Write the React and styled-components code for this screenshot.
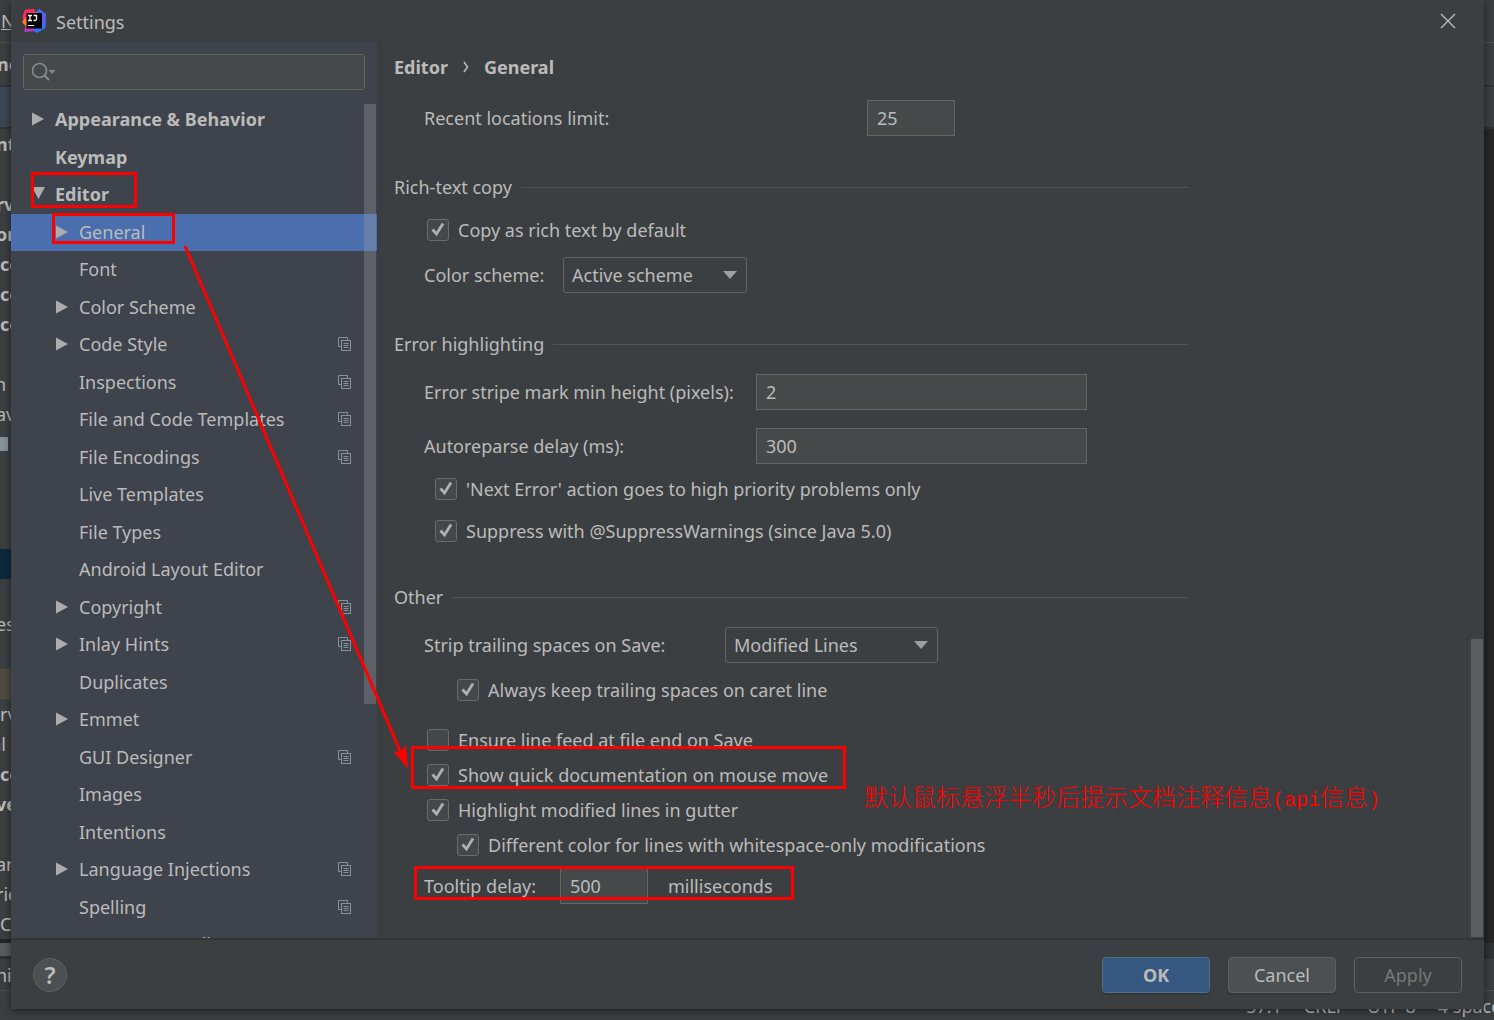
import React, { useState } from "react";
import styled, { createGlobalStyle, css } from "styled-components";

const TREE = [
  { label: "Appearance & Behavior", level: 0, arrow: "closed" },
  { label: "Keymap", level: 0 },
  { label: "Editor", level: 0, arrow: "open" },
  { label: "General", level: 1, arrow: "closed" },
  { label: "Font", level: 1 },
  { label: "Color Scheme", level: 1, arrow: "closed" },
  { label: "Code Style", level: 1, arrow: "closed", project: true },
  { label: "Inspections", level: 1, project: true },
  { label: "File and Code Templates", level: 1, project: true },
  { label: "File Encodings", level: 1, project: true },
  { label: "Live Templates", level: 1 },
  { label: "File Types", level: 1 },
  { label: "Android Layout Editor", level: 1 },
  { label: "Copyright", level: 1, arrow: "closed", project: true },
  { label: "Inlay Hints", level: 1, arrow: "closed", project: true },
  { label: "Duplicates", level: 1 },
  { label: "Emmet", level: 1, arrow: "closed" },
  { label: "GUI Designer", level: 1, project: true },
  { label: "Images", level: 1 },
  { label: "Intentions", level: 1 },
  { label: "Language Injections", level: 1, arrow: "closed", project: true },
  { label: "Spelling", level: 1, project: true },
  { label: "TextMate Bundles", level: 1 },
];

// visible ends of the project tree rows behind the dialog
const PROJECT_ROWS = [
  { text: "nt", bold: true, cut: true },
  {},
  { text: "rv", bold: true, cut: true },
  { text: "or", bold: true, cut: true },
  { text: "cc", bold: true },
  { text: "cc", bold: true },
  { text: "cc", bold: true },
  {},
  { text: "n", end: true },
  { text: "av", cut: true },
  { block: true },
  {},
  {},
  {},
  { color: "#0d293e" },
  {},
  { text: "es", cut: true },
  {},
  { color: "#4f4b41" },
  { text: "rv" },
  { text: "al", end: true },
  { text: "cc", bold: true },
  { text: "ve", bold: true, cut: true },
  {},
  { text: "ar", cut: true },
  { text: "rie", cut: true },
  { text: "C" },
];

const Logo = () => (
  <svg width="24" height="24" viewBox="0 0 24 24" aria-hidden="true">
    <defs>
      <linearGradient id="ijRed" x1="0" y1="0" x2="0" y2="1">
        <stop offset="0" stopColor="#fe2857" />
        <stop offset="0.5" stopColor="#fe315d" />
        <stop offset="1" stopColor="#a23ccf" />
      </linearGradient>
      <linearGradient id="ijBlue" x1="0" y1="0" x2="0" y2="1">
        <stop offset="0" stopColor="#2b7cf5" />
        <stop offset="0.35" stopColor="#6b57e8" />
        <stop offset="1" stopColor="#167dff" />
      </linearGradient>
    </defs>
    <path d="M13 4 L17 0 L24 5 L23.500 19 L15 24 L10 21 Z" fill="url(#ijBlue)" />
    <path d="M3 0.500 L12 0 L15 5 L8 14 L13 22 L2 23 L3.500 17 L0.500 8 Z" fill="url(#ijRed)" />
    <path d="M0 13 L3 9 L7 12 L4 17.500 Z" fill="#fc801d" />
    <rect x="4.500" y="4" width="15.500" height="15.500" fill="#000" />
    <path d="M6 6.500h4M8 6.500v5M6 11.500h4M11.500 6.500h3v3.500q0 1.500-1.500 1.500h-1.500" stroke="#fff" strokeWidth="1.300" fill="none" />
    <path d="M6 16.500h6" stroke="#fff" strokeWidth="1" />
  </svg>
);

const CloseIcon = () => (
  <svg width="16" height="16" viewBox="0 0 16 16" aria-hidden="true">
    <path d="M1 1l14 14M15 1L1 15" stroke="#bbb" strokeWidth="1.400" />
  </svg>
);

const SearchIcon = () => (
  <svg width="26" height="20" viewBox="0 0 26 20" aria-hidden="true">
    <circle cx="7.500" cy="8.500" r="7" fill="none" stroke="#7f8b91" strokeWidth="1.700" />
    <path d="M12 13l5 5" stroke="#7f8b91" strokeWidth="2.200" />
    <path d="M16.500 8h7l-3.500 4z" fill="#7f8b91" />
  </svg>
);

const ProjectIcon = () => (
  <svg width="14" height="14" viewBox="0 0 14 14" fill="none" stroke="#87939a" aria-label="For current project">
    <path d="M3.500 9.500h-3v-9h9v2.500" />
    <rect x="3.500" y="3.500" width="9" height="10" />
    <path d="M5.500 6.500h5M5.500 8.500h5M5.500 10.500h5" />
  </svg>
);

const Twisty = ({ kind }) => (
  <svg width="13" height="14" viewBox="0 0 13 14" fill="#adadad" aria-hidden="true">
    {kind === "closed" && <path d="M0 0.500v13l12-6.500z" />}
    {kind === "open" && <path d="M0 0h13l-6.500 12z" />}
  </svg>
);

const Check = ({ label, checked, indent, gap }) => {
  const [on, setOn] = useState(checked);
  return (
    <CheckLabel $indent={indent} $gap={gap}>
      <Box>
        <Tick type="checkbox" checked={on} onChange={(e) => setOn(e.target.checked)} />
        {on && (
          <svg width="22" height="22" viewBox="0 0 22 22" aria-hidden="true">
            <path d="M5.500 10.500l4 4.500 6.500-10.500" fill="none" stroke="#b0b0b0" strokeWidth="2.800" />
          </svg>
        )}
      </Box>
      {label}
    </CheckLabel>
  );
};

const Select = ({ id, value, width }) => (
  <Combo $width={width}>
    <ComboInput id={id} defaultValue={value}>
      <option>{value}</option>
    </ComboInput>
    <svg width="14" height="8" viewBox="0 0 14 8" aria-hidden="true">
      <path d="M0 0h14l-7 8z" fill="#9da0a2" />
    </svg>
  </Combo>
);

const SectionTitle = ({ children }) => (
  <Heading>
    {children}
    <Rule />
  </Heading>
);

const App = () => {
  const [selected, setSelected] = useState("General");

  return (
    <Desktop>
      <GlobalStyle />
      <Ide aria-hidden="true">
        <IdeMenu><u>N</u></IdeMenu>
        <IdeNav>nc</IdeNav>
        <IdeTabs />
        <IdeMain>
          <IdeTree>
            {PROJECT_ROWS.map((row, i) => (
              <IdeRow key={i} $bold={row.bold} $end={row.end} $cut={row.cut} $color={row.color}>
                {row.block ? <IdeBlock /> : <span>{row.text}</span>}
              </IdeRow>
            ))}
          </IdeTree>
        </IdeMain>
        <IdeScroll />
        <IdeTools>nin</IdeTools>
        <IdeStatus>
          <span>57:1</span>
          <span>CRLF</span>
          <span>UTF-8</span>
          <span>4 spaces</span>
        </IdeStatus>
      </Ide>

      <Dialog role="dialog" aria-label="Settings">
        <TitleBar>
          <Logo />
          <Title>Settings</Title>
          <CloseButton type="button" aria-label="Close"><CloseIcon /></CloseButton>
        </TitleBar>

        <Body>
          <Sidebar>
            <SearchBox>
              <SearchIcon />
              <SearchInput type="text" aria-label="Search settings" />
            </SearchBox>
            <Tree>
              {TREE.map((item) => (
                <TreeRow
                  key={item.label}
                  type="button"
                  $level={item.level}
                  $selected={item.label === selected}
                  onClick={() => setSelected(item.label)}
                >
                  <Twisty kind={item.arrow} />
                  <TreeLabel>{item.label}</TreeLabel>
                  {item.project && <ProjectIcon />}
                </TreeRow>
              ))}
            </Tree>
            <SideThumb />
          </Sidebar>

          <Content>
            <Breadcrumb>
              <span>Editor</span>
              <svg width="6" height="12" viewBox="0 0 6 12" aria-hidden="true">
                <path d="M1 1l3.500 5-3.500 5" fill="none" stroke="#bbb" strokeWidth="1.500" />
              </svg>
              <span>General</span>
            </Breadcrumb>
            <Form>
              <Field $gap={8}>
                <FieldLabel htmlFor="recent" $width={443}>Recent locations limit:</FieldLabel>
                <TextInput id="recent" type="text" defaultValue="25" $width={88} />
              </Field>

              <SectionTitle>Rich-text copy</SectionTitle>
              <Check label="Copy as rich text by default" checked indent={33} gap={16} />
              <Field $gap={12}>
                <FieldLabel htmlFor="scheme" $width={139}>Color scheme:</FieldLabel>
                <Select id="scheme" value="Active scheme" width={184} />
              </Field>

              <SectionTitle>Error highlighting</SectionTitle>
              <Field $gap={18}>
                <FieldLabel htmlFor="stripe" $width={332}>Error stripe mark min height (pixels):</FieldLabel>
                <TextInput id="stripe" type="text" defaultValue="2" $width={331} />
              </Field>
              <Field $gap={18}>
                <FieldLabel htmlFor="reparse" $width={332}>Autoreparse delay (ms):</FieldLabel>
                <TextInput id="reparse" type="text" defaultValue="300" $width={331} />
              </Field>
              <Check label="'Next Error' action goes to high priority problems only" checked indent={41} gap={10} />
              <Check label="Suppress with @SuppressWarnings (since Java 5.0)" checked indent={41} gap={12} />

              <SectionTitle>Other</SectionTitle>
              <Field $gap={18}>
                <FieldLabel htmlFor="strip" $width={301}>Strip trailing spaces on Save:</FieldLabel>
                <Select id="strip" value="Modified Lines" width={213} />
              </Field>
              <Check label="Always keep trailing spaces on caret line" checked indent={63} gap={12} />
              <Check label="Ensure line feed at file end on Save" checked={false} indent={33} gap={20} />
              <Check label="Show quick documentation on mouse move" checked indent={33} gap={5} />
              <Check label="Highlight modified lines in gutter" checked indent={33} gap={5} />
              <Check label="Different color for lines with whitespace-only modifications" checked indent={63} gap={5} />
              <Field $gap={8}>
                <FieldLabel htmlFor="delay" $width={136}>Tooltip delay:</FieldLabel>
                <TextInput id="delay" type="text" defaultValue="500" $width={88} />
                <Unit>milliseconds</Unit>
              </Field>
            </Form>
            <ContentThumb />
          </Content>
        </Body>

        <Footer>
          <HelpButton type="button" aria-label="Help">?</HelpButton>
          <Button type="button" $primary>OK</Button>
          <Button type="button">Cancel</Button>
          <Button type="button" disabled>Apply</Button>
        </Footer>
      </Dialog>

      <Frame $x={31} $y={172} $w={106} $h={36} />
      <Frame $x={52} $y={213} $w={123} $h={31} />
      <Frame $x={411} $y={746} $w={435} $h={43} />
      <Frame $x={414} $y={866} $w={380} $h={34} />
      <Arrow width="240" height="540" viewBox="0 0 240 540" aria-hidden="true">
        <path d="M5 6L223 518" stroke="#f00" strokeWidth="3" />
        <path d="M228 529l-15-18 7 1 6-7z" fill="#f00" />
      </Arrow>
      <Note>默认鼠标悬浮半秒后提示文档注释信息<Latin>(api</Latin>信息<Latin>)</Latin></Note>
    </Desktop>
  );
};

export default App;

// Styled Components
const GlobalStyle = createGlobalStyle`
  * {
    box-sizing: border-box;
  }
  body {
    margin: 0;
    background: #3c3f41;
    color: #bbbbbb;
    font-family: "Noto Sans", "Open Sans", "Noto Sans CJK SC", sans-serif;
    font-size: 18px;
    line-height: 24px;
  }
  button, input, select {
    font: inherit;
    color: inherit;
  }
`;

const Desktop = styled.div`
  position: relative;
  display: grid;
  grid-template: minmax(0, 1fr) / minmax(0, 1fr);
  height: 100vh;
  overflow: hidden;
`;

/* main window behind the dialog */
const Ide = styled.div`
  grid-area: 1 / 1;
  display: flex;
  flex-direction: column;
  overflow: hidden;
  white-space: nowrap;
`;

const IdeMenu = styled.div`
  height: 43px;
  padding: 9px 0 0 1px;
  border-bottom: 1px solid #515151;
`;

const IdeNav = styled.div`
  height: 44px;
  padding-top: 9px;
  text-indent: -3px;
  font-weight: 700;
  border-bottom: 2px solid #323232;
`;

const IdeTabs = styled.div`
  height: 42px;
  background: linear-gradient(90deg, #3b4754 11px, #3c3f41 11px);
  border-bottom: 2px solid #323232;
`;

const IdeMain = styled.div`
  flex: 1;
  min-height: 0;
  background: #262626;
`;

const IdeTree = styled.div`
  width: 11px;
  background: #3c3f41;
  overflow: hidden;
`;

const IdeRow = styled.div`
  display: flex;
  align-items: center;
  justify-content: ${(p) => (p.$end ? "flex-end" : "flex-start")};
  height: 30px;
  padding-right: ${(p) => (p.$end ? 5 : 0)}px;
  text-indent: ${(p) => (p.$cut ? -4 : 0)}px;
  font-weight: ${(p) => (p.$bold ? 700 : 400)};
  background: ${(p) => p.$color || "transparent"};
`;

const IdeBlock = styled.div`
  width: 8px;
  height: 14px;
  background: #87939a;
`;

const IdeScroll = styled.div`
  height: 16px;
  background: linear-gradient(90deg, #595b5d 11px, #303132 11px);
  border-bottom: 3px solid #303030;
`;

const IdeTools = styled.div`
  height: 32px;
  padding-top: 4px;
  text-indent: -4px;
  border-bottom: 1px solid #515151;
`;

const IdeStatus = styled.div`
  display: flex;
  justify-content: flex-end;
  gap: 22px;
  height: 29px;
  padding-top: 3px;
  margin-right: -16px;
`;

/* dialog */
const Dialog = styled.div`
  grid-area: 1 / 1;
  display: flex;
  flex-direction: column;
  margin: 0 10px 11px 11px;
  background: #3c3f41;
  box-shadow: 0 2px 8px rgba(0, 0, 0, 0.5);
  z-index: 1;
`;

const TitleBar = styled.header`
  display: flex;
  align-items: center;
  height: 42px;
  padding: 0 22px 0 11px;
`;

const Title = styled.h1`
  flex: 1;
  margin: 2px 0 0 10px;
  font-size: 18px;
  font-weight: 400;
`;

const CloseButton = styled.button`
  display: flex;
  padding: 6px;
  border: 0;
  background: none;
`;

const Body = styled.div`
  flex: 1;
  display: flex;
  min-height: 0;
`;

const Sidebar = styled.nav`
  position: relative;
  flex: none;
  display: flex;
  flex-direction: column;
  width: 366px;
  padding-top: 12px;
  background: #3e434c;
`;

const SearchBox = styled.div`
  flex: none;
  display: flex;
  align-items: center;
  height: 36px;
  margin: 0 12px 11px;
  padding-left: 8px;
  background: #45494a;
  border: 1px solid #646464;
  border-radius: 3px;
`;

const SearchInput = styled.input`
  flex: 1;
  min-width: 0;
  border: 0;
  outline: 0;
  background: none;
`;

const Tree = styled.div`
  flex: 1;
  min-height: 0;
  overflow: hidden;
`;

const TreeRow = styled.button`
  display: flex;
  align-items: center;
  gap: 10px;
  width: 100%;
  height: 38px;
  padding: 0 25px 2px ${(p) => 21 + p.$level * 24}px;
  border: 0;
  background: ${(p) => (p.$selected ? "#4b6eaf" : "transparent")};
  font-weight: ${(p) => (p.$level === 0 ? 700 : 400)};
  text-align: left;

  &:nth-child(even) {
    height: 37px;
  }
`;

const TreeLabel = styled.span`
  flex: 1;
  white-space: nowrap;
`;

const Thumb = styled.div`
  position: absolute;
  width: 12px;
  background: rgba(166, 166, 166, 0.3);
`;

const SideThumb = styled(Thumb)`
  top: 62px;
  right: 1px;
  height: 600px;
`;

const ContentThumb = styled(Thumb)`
  right: 1px;
  bottom: 1px;
  height: 298px;
`;

const Content = styled.main`
  position: relative;
  flex: 1;
  min-width: 0;
  padding-left: 17px;
  overflow: hidden;
`;

const Breadcrumb = styled.div`
  display: flex;
  align-items: center;
  gap: 15px;
  height: 50px;
  font-weight: 700;
`;

const Form = styled.form`
  max-width: 794px;
`;

const Heading = styled.h2`
  display: flex;
  align-items: center;
  gap: 9px;
  margin: 39px 0 0;
  font-size: 18px;
  font-weight: 400;
`;

const Rule = styled.span`
  flex: 1;
  height: 1px;
  background: #515355;
`;

const Field = styled.div`
  display: flex;
  align-items: center;
  height: 36px;
  margin-top: ${(p) => p.$gap}px;
  padding-left: 30px;
`;

const FieldLabel = styled.label`
  flex: none;
  width: ${(p) => p.$width}px;
`;

const TextInput = styled.input`
  width: ${(p) => p.$width}px;
  height: 36px;
  padding: 0 9px;
  background: #45494a;
  border: 1px solid #646464;
  outline: 0;
`;

const Unit = styled.span`
  margin-left: 20px;
`;

const Combo = styled.span`
  display: grid;
  align-items: center;
  width: ${(p) => p.$width}px;

  > * {
    grid-area: 1 / 1;
  }
  svg {
    justify-self: end;
    margin-right: 10px;
    pointer-events: none;
  }
`;

const ComboInput = styled.select`
  width: 100%;
  height: 36px;
  padding: 0 8px;
  appearance: none;
  background: #3c3f41;
  border: 1px solid #646464;
  border-radius: 3px;
`;

const CheckLabel = styled.label`
  display: flex;
  align-items: center;
  gap: 9px;
  height: 30px;
  margin-top: ${(p) => p.$gap}px;
  padding-left: ${(p) => p.$indent}px;
`;

const Box = styled.span`
  display: grid;

  > * {
    grid-area: 1 / 1;
  }
  svg {
    pointer-events: none;
  }
`;

const Tick = styled.input`
  width: 22px;
  height: 22px;
  margin: 0;
  appearance: none;
  background: #43494a;
  border: 1px solid #6b6b6b;
  border-radius: 3px;
`;

const Footer = styled.footer`
  display: flex;
  align-items: center;
  gap: 18px;
  height: 71px;
  padding: 0 22px;
  border-top: 2px solid #323537;
`;

const HelpButton = styled.button`
  width: 34px;
  height: 34px;
  margin-right: auto;
  padding: 0;
  background: #4c5052;
  border: 1px solid #5e6060;
  border-radius: 50%;
  font-size: 24px;
  font-weight: 600;
`;

const Button = styled.button`
  width: 108px;
  height: 36px;
  padding: 0;
  background: #4c5052;
  border: 1px solid #5e6060;
  border-radius: 4px;
  box-shadow: 0 2px 1px rgba(0, 0, 0, 0.12);

  ${(p) => p.$primary && css`
    background: #365880;
    border-color: #4c708c;
    font-weight: 700;
  `}

  &:disabled {
    background: none;
    color: #777777;
    box-shadow: none;
  }
`;

/* red marks drawn over the dialog */
const Frame = styled.div`
  position: absolute;
  left: ${(p) => p.$x}px;
  top: ${(p) => p.$y}px;
  width: ${(p) => p.$w}px;
  height: ${(p) => p.$h}px;
  border: 3px solid #ff0000;
  pointer-events: none;
  z-index: 2;
`;

const Arrow = styled.svg`
  position: absolute;
  left: 180px;
  top: 240px;
  pointer-events: none;
  z-index: 2;
`;

const Note = styled.p`
  position: absolute;
  left: 864px;
  top: 784px;
  margin: 0;
  color: #ff0000;
  font-family: "Noto Sans CJK SC", sans-serif;
  font-size: 24px;
  font-weight: 300;
  white-space: nowrap;
  z-index: 2;
`;

const Latin = styled.span`
  font-family: "Liberation Mono", monospace;
  font-size: 20px;
`;
